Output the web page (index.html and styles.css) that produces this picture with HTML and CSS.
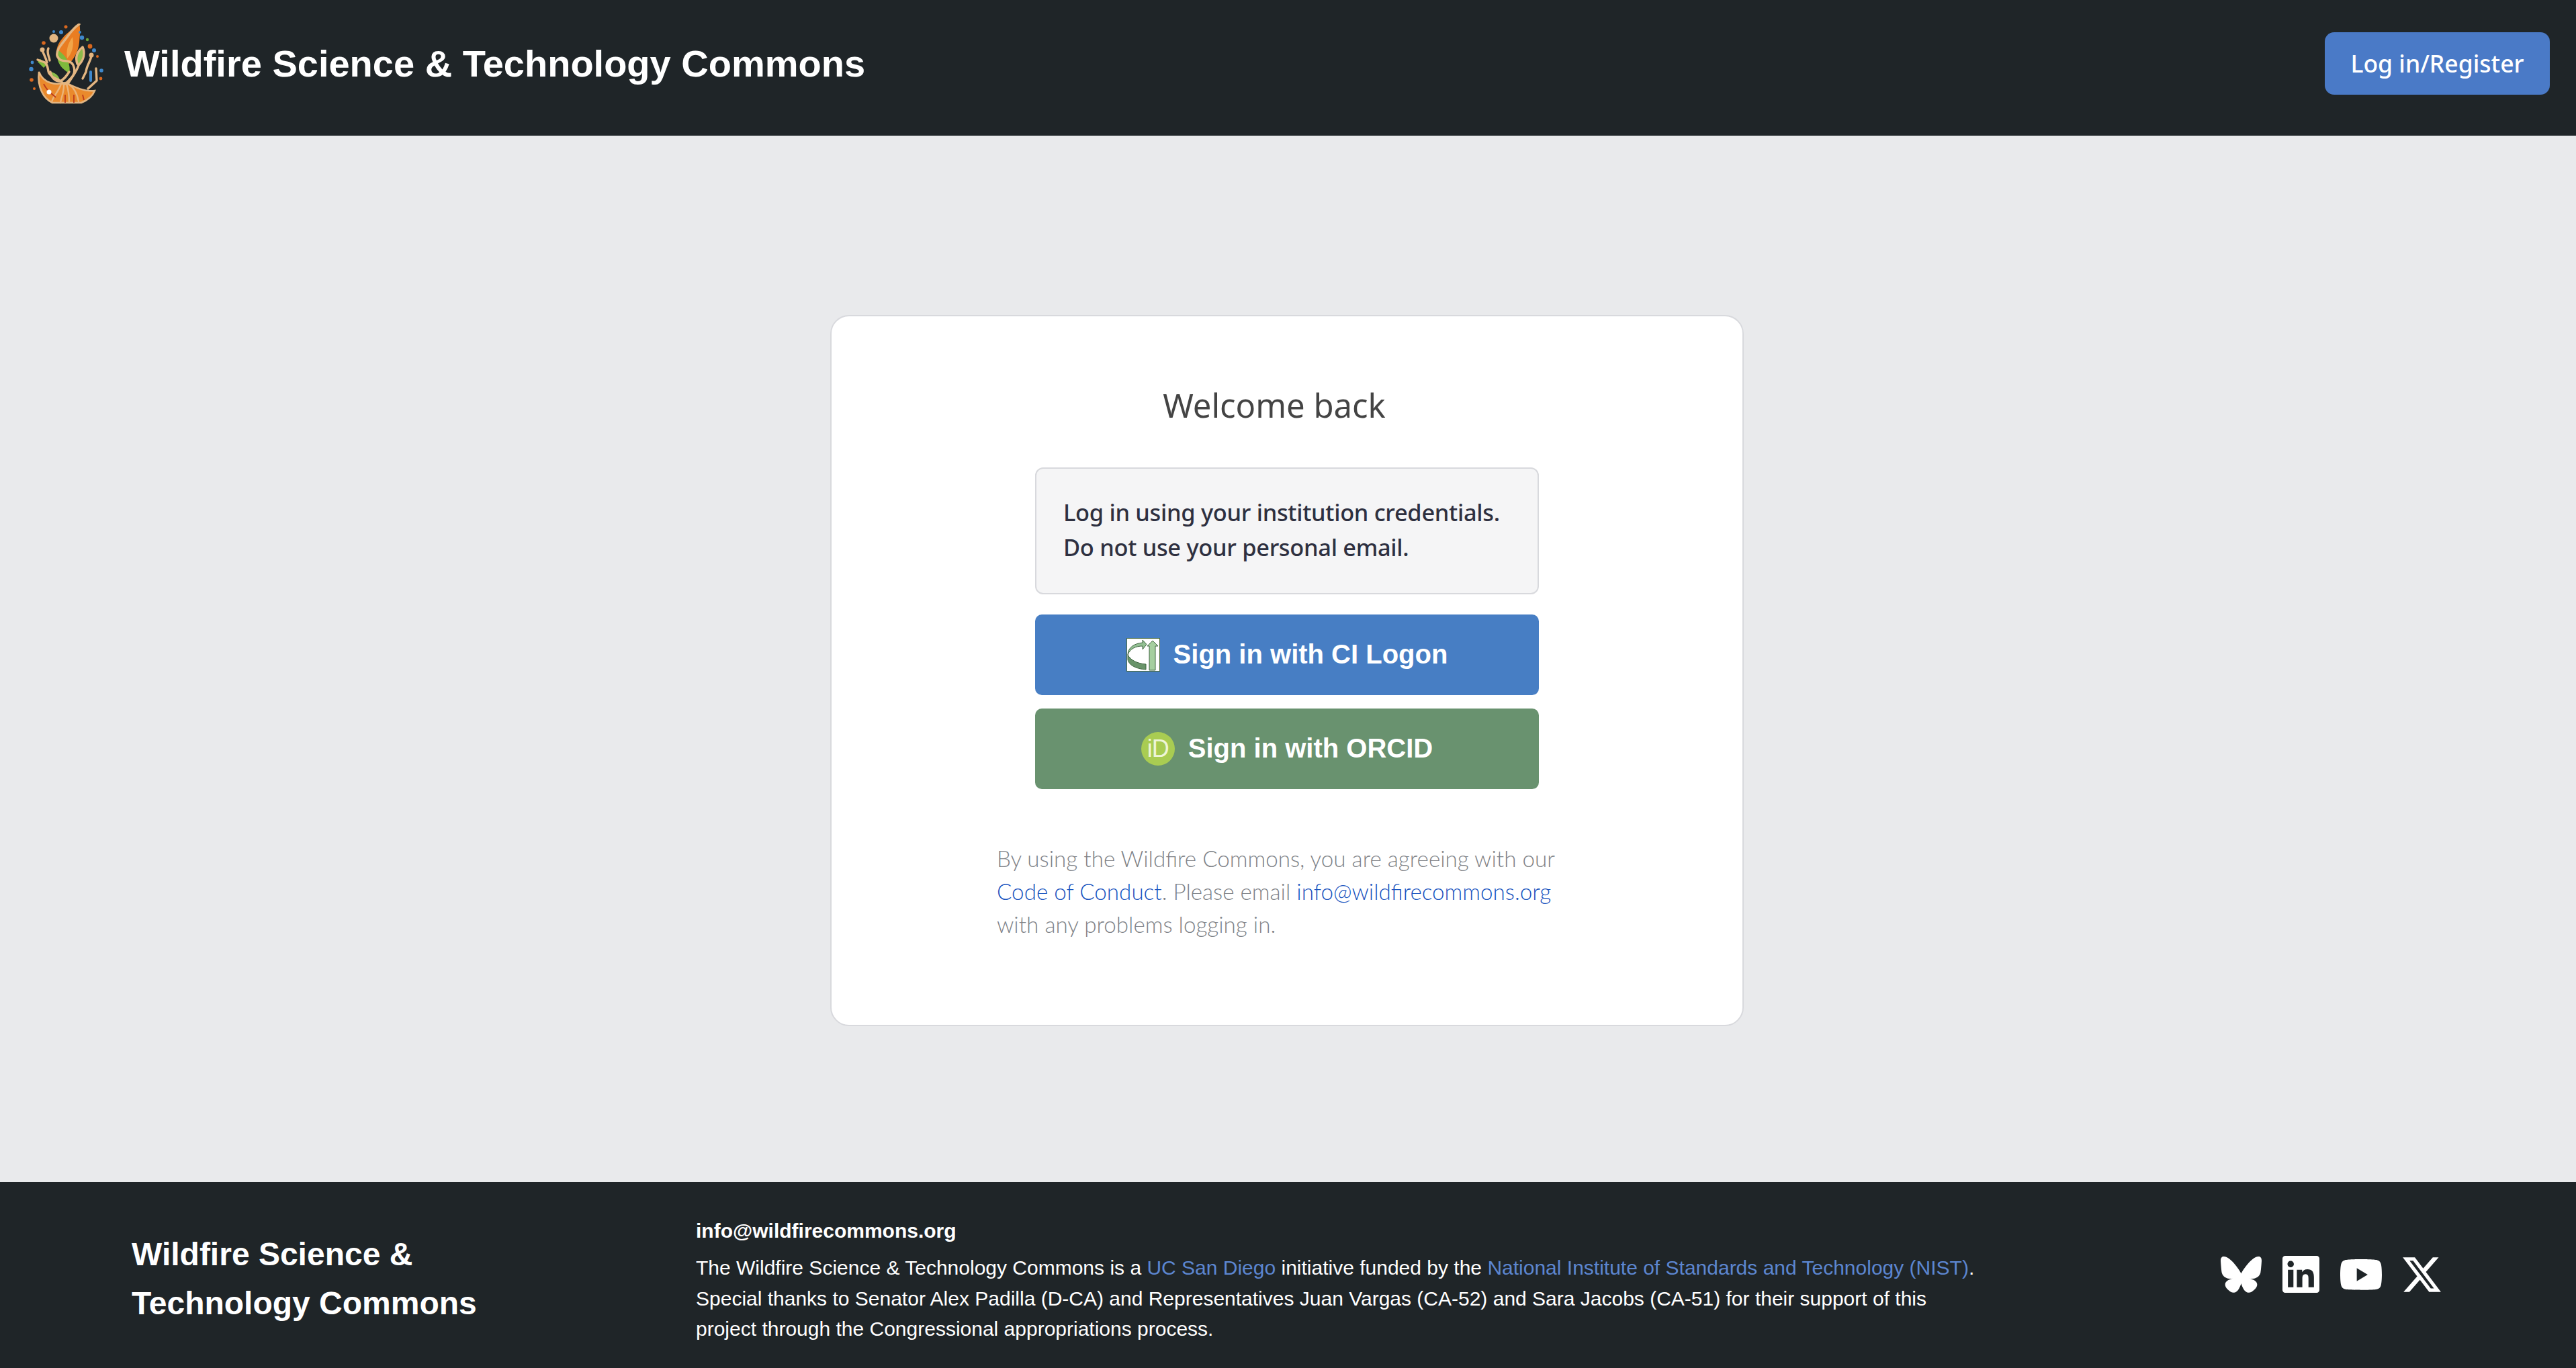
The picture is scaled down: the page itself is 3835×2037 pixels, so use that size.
FILE: index.html
```html
<!DOCTYPE html>
<html lang="en">
<head>
    <meta charset="UTF-8">
    <meta name="viewport" content="width=device-width, initial-scale=1.0">
    <title>Wildfire Science &amp; Technology Commons</title>
    <link rel="stylesheet" href="styles.css">
</head>
<body>

    <header class="topbar">
        <div class="brand">
            <svg class="logo" viewBox="0 0 112 120" aria-hidden="true">
                <!-- flames -->
                <path fill="#ea8a2c" stroke="#e3b682" stroke-width="2.5" d="M15 72C12 95 22 112 35 118L78 118C88 114 95 108 98 100C85 102 70 96 55 88C40 92 22 90 15 72Z"/>
                <path fill="#e97d22" d="M75 0C66 8 56 14 50 22C43 30 40 38 41 50C46 54 54 58 60 60C68 52 74 40 75 28C76 18 77 8 75 0Z"/>
                <path fill="#f2a548" d="M65 20C58 30 55 40 57 52C63 46 68 34 65 20Z"/>
                <path fill="#7fb93c" d="M44 40C39 54 46 66 60 74C63 60 55 48 44 40Z"/>
                <path fill="#8cbc4a" d="M80 37C73 42 69 50 72 62C80 55 84 46 80 37Z"/>
                <path fill="#8cbc4a" d="M32 72C33 80 39 86 46 86C46 79 40 73 32 72Z"/>
                <path fill="#7fb93c" d="M13 57L22 66L27 61L17 53Z"/>
                <!-- circuit branches -->
                <g fill="none" stroke="#e3b682" stroke-width="3.4" stroke-linecap="round" stroke-linejoin="round">
                    <path d="M52 91C48 82 36 84 30 74C27 68 30 64 24 58L13 54"/>
                    <path d="M54 90C62 82 72 76 66 62C60 50 48 62 42 48C40 38 52 28 60 16C66 8 70 4 75 1"/>
                    <path d="M72 60C68 48 74 40 80 35C84 44 82 54 74 62C72 70 64 80 58 90"/>
                    <path d="M20 40C22 46 25 50 27 58"/>
                    <path d="M29 37C26 44 30 48 31 55"/>
                    <path d="M32 72C33 80 39 86 46 86C52 84 56 78 60 72"/>
                    <path d="M93 48C92 56 86 62 85 72L80 82"/>
                    <path d="M100 67L101 85L88 97"/>
                </g>
                <g fill="none" stroke="#eab47a" stroke-width="2.4" stroke-linecap="round">
                    <path d="M48 90C44 102 36 108 34 117"/>
                    <path d="M52 92C52 104 48 110 47 118"/>
                    <path d="M56 90C60 102 60 110 60 118"/>
                    <path d="M60 91C68 96 72 106 74 116"/>
                </g>
                <g fill="none" stroke="#bd3a1c" stroke-width="1.8">
                    <path d="M22 90C28 102 34 104 40 110"/>
                    <path d="M54 106L54 118"/>
                    <path d="M67 106L67 118"/>
                    <path d="M80 106L82 114"/>
                </g>
                <circle cx="30" cy="102" r="3.5" fill="#fff"/>
                <circle cx="37" cy="22" r="6.5" fill="#e3b682"/>
                <circle cx="20" cy="39" r="3.5" fill="#e3b682"/>
                <circle cx="93" cy="47" r="3.5" fill="#e3b682"/>
                <!-- dots -->
                <g fill="#3f88cc">
                    <circle cx="48" cy="13" r="3"/>
                    <circle cx="79" cy="21" r="3.2"/>
                    <circle cx="97" cy="40" r="3"/>
                    <circle cx="3.5" cy="68" r="3.2"/>
                    <circle cx="5" cy="58" r="2.4"/>
                    <circle cx="108" cy="70" r="2.8"/>
                    <circle cx="76" cy="13" r="2"/>
                    <circle cx="37" cy="12" r="2"/>
                    <rect x="90" y="70" width="4" height="17" rx="2"/>
                </g>
                <g fill="#d9681f">
                    <circle cx="55" cy="5" r="2.5"/>
                    <circle cx="22" cy="29" r="2.8"/>
                    <circle cx="91" cy="34" r="3.4"/>
                    <circle cx="4" cy="84" r="2.8"/>
                    <circle cx="8" cy="97" r="2"/>
                    <circle cx="107" cy="82" r="2.4"/>
                    <circle cx="102" cy="49" r="2"/>
                </g>
                <circle cx="87" cy="24" r="2.2" fill="#6da33a"/>
            </svg>
            <span class="brand-name">Wildfire Science &amp; Technology Commons</span>
        </div>
        <a class="login-btn" href="#">Log in/Register</a>
    </header>

    <main class="content">
        <section class="card">
            <h1 class="card-title">Welcome back</h1>
            <div class="notice">
                Log in using your institution credentials.<br>
                Do not use your personal email.
            </div>
            <div class="providers">
                <a class="provider provider-cilogon" href="#">
                    <svg class="cilogon-icon" viewBox="0 0 50 50" aria-hidden="true">
                        <rect x="0.5" y="0.5" width="49" height="49" fill="#fff" stroke="#4b6b3f"/>
                        <path fill="#69946a" stroke="#3f6440" d="M2 25C6 33 16 38 29 39L29 47C14 46 3 40 2 32Z"/>
                        <path fill="#93c093" stroke="#3f6440" d="M2 25C2 14 12 8 24 7L24 3L30 9.5L24 17L24 12C14 12 5 16 2 25Z"/>
                        <path fill="#a5cf9f" stroke="#3f6440" d="M39 4L47 12L43 12L43 48L34 48L34 12L31 12Z"/>
                    </svg>
                    <span>Sign in with CI Logon</span>
                </a>
                <a class="provider provider-orcid" href="#">
                    <span class="orcid-icon">iD</span>
                    <span>Sign in with ORCID</span>
                </a>
            </div>
            <p class="agreement">
                By using the Wildfire Commons, you are agreeing with our
                <a href="#">Code of Conduct</a>. Please email
                <a href="#">info@wildfirecommons.org</a>
                with any problems logging in.
            </p>
        </section>
    </main>

    <footer class="footer">
        <div class="footer-name">Wildfire Science &amp;<br>Technology Commons</div>
        <div class="footer-text">
            <div class="footer-email">info@wildfirecommons.org</div>
            <p>The Wildfire Science &amp; Technology Commons is a <a href="#">UC San Diego</a> initiative funded by the <a href="#">National Institute of Standards and Technology (NIST)</a>. Special thanks to Senator Alex Padilla (D-CA) and Representatives Juan Vargas (CA-52) and Sara Jacobs (CA-51) for their support of this project through the Congressional appropriations process.</p>
        </div>
        <div class="socials">
            <svg class="icon-bluesky" viewBox="0 0 568 501" aria-hidden="true"><path d="M123.121 33.664C188.241 82.553 258.281 181.68 284 234.873c25.719-53.192 95.759-152.32 160.879-201.21C491.866-1.611 568-28.906 568 57.947c0 17.346-9.945 145.713-15.778 166.555-20.275 72.453-94.155 90.933-159.875 79.748C507.222 323.8 536.444 388.56 473.333 453.32c-119.86 122.992-172.272-30.859-185.702-70.281-2.462-7.227-3.614-10.608-3.631-7.733-.017-2.875-1.169.506-3.631 7.733-13.43 39.422-65.842 193.273-185.702 70.281-63.111-64.76-33.89-129.52 80.986-149.071-65.72 11.185-139.6-7.295-159.875-79.748C9.945 203.659 0 75.291 0 57.946 0-28.906 76.135-1.612 123.121 33.664Z"/></svg>
            <svg class="icon-linkedin" viewBox="0 0 24 24" aria-hidden="true"><path d="M20.447 20.452h-3.554v-5.569c0-1.328-.027-3.037-1.852-3.037-1.853 0-2.136 1.445-2.136 2.939v5.667H9.351V9h3.414v1.561h.046c.477-.9 1.637-1.85 3.37-1.85 3.601 0 4.267 2.37 4.267 5.455v6.286zM5.337 7.433c-1.144 0-2.063-.926-2.063-2.065 0-1.138.92-2.063 2.063-2.063 1.14 0 2.064.925 2.064 2.063 0 1.139-.925 2.065-2.064 2.065zm1.782 13.019H3.555V9h3.564v11.452zM22.225 0H1.771C.792 0 0 .774 0 1.729v20.542C0 23.227.792 24 1.771 24h20.451C23.2 24 24 23.227 24 22.271V1.729C24 .774 23.2 0 22.222 0h.003z"/></svg>
            <svg class="icon-youtube" viewBox="0 3.5 24 17" preserveAspectRatio="none" aria-hidden="true"><path d="M23.498 6.186a3.016 3.016 0 0 0-2.122-2.136C19.505 3.545 12 3.545 12 3.545s-7.505 0-9.377.505A3.017 3.017 0 0 0 .502 6.186C0 8.07 0 12 0 12s0 3.93.502 5.814a3.016 3.016 0 0 0 2.122 2.136c1.871.505 9.376.505 9.376.505s7.505 0 9.377-.505a3.015 3.015 0 0 0 2.122-2.136C24 15.93 24 12 24 12s0-3.93-.502-5.814zM9.545 15.568V8.432L15.818 12l-6.273 3.568z"/></svg>
            <svg class="icon-x" viewBox="0 1 24 22" aria-hidden="true"><path d="M18.901 1.153h3.68l-8.04 9.19L24 22.846h-7.406l-5.8-7.584-6.638 7.584H.474l8.6-9.83L0 1.154h7.594l5.243 6.932ZM17.61 20.644h2.039L6.486 3.24H4.298Z"/></svg>
        </div>
    </footer>

</body>
</html>
```

FILE: styles.css
```css
/* Basic Reset */
* {
    margin: 0;
    padding: 0;
    box-sizing: border-box;
}

body {
    display: flex;
    flex-direction: column;
    min-height: 100vh;
    background: #e9eaec;
    font-family: "Noto Sans", sans-serif;
}

a {
    text-decoration: none;
}

/* Header */
.topbar {
    display: flex;
    justify-content: space-between;
    align-items: center;
    height: 202px;
    padding: 0 39px 13px 43px;
    background: #1f2528;
}

.brand {
    display: flex;
    align-items: center;
    gap: 30px;
}

.logo {
    width: 112px;
    height: 120px;
    filter: blur(0.5px);
}

.brand-name {
    color: #fff;
    font-family: "Liberation Sans", sans-serif;
    font-size: 56px;
    font-weight: 700;
}

.login-btn {
    display: flex;
    align-items: center;
    justify-content: center;
    width: 335px;
    height: 93px;
    padding-bottom: 2px;
    background: #4a7ac7;
    color: #fff;
    font-size: 35.5px;
    font-weight: 500;
    border-radius: 14px;
}

/* Login card */
.content {
    flex: 1;
    display: flex;
    justify-content: center;
    align-items: flex-start;
    padding: 267px 3px 0 0;
}

.card {
    display: flex;
    flex-direction: column;
    align-items: center;
    width: 1360px;
    height: 1059px;
    padding-top: 102px;
    background: #fff;
    border: 2.5px solid #d8d9dd;
    border-radius: 28px;
}

.card-title {
    padding-right: 38px;
    color: #444;
    font-size: 49px;
    font-weight: 400;
    line-height: 60px;
}

.notice {
    width: 750px;
    height: 189px;
    margin-top: 62.5px;
    padding: 39px 40px;
    background: #f5f5f6;
    border: 2.5px solid #d8d9dd;
    border-radius: 12px;
    color: #2e3040;
    font-size: 34.4px;
    font-weight: 500;
    letter-spacing: -0.3px;
    line-height: 52px;
}

.providers {
    display: flex;
    flex-direction: column;
    gap: 20px;
    width: 750px;
    margin-top: 30px;
}

.provider {
    display: flex;
    align-items: center;
    justify-content: center;
    gap: 20px;
    height: 120px;
    border-radius: 10px;
    color: #fff;
    font-family: "Liberation Sans", sans-serif;
    font-size: 40px;
    font-weight: 700;
}

.provider-cilogon {
    background: #477ec4;
}

.provider-orcid {
    background: #69926f;
}

.cilogon-icon {
    width: 50px;
    height: 50px;
}

.orcid-icon {
    display: flex;
    align-items: center;
    justify-content: center;
    width: 50px;
    height: 50px;
    border-radius: 50%;
    background: #a9cc52;
    color: #eef5d8;
    font-size: 36px;
    font-weight: 400;
    letter-spacing: -1px;
}

.agreement {
    width: 864px;
    margin-top: 79px;
    color: #808388;
    font-family: Lato, sans-serif;
    font-size: 33.2px;
    font-weight: 300;
    line-height: 49px;
}

.agreement a {
    color: #1a55c0;
}

/* Footer */
.footer {
    display: flex;
    align-items: center;
    height: 277px;
    padding: 14px 201px 0 196px;
    background: #1f2528;
    color: #fff;
    font-family: "Liberation Sans", sans-serif;
}

.footer-name {
    width: 840px;
    margin-bottom: 4px;
    font-size: 48px;
    font-weight: 700;
    line-height: 73px;
}

.footer-text {
    width: 1915px;
    font-size: 30px;
    line-height: 45.5px;
}

.footer-email {
    margin-bottom: 10px;
    font-weight: 700;
}

.footer-text a {
    color: #5c86d0;
}

.socials {
    display: flex;
    align-items: center;
    gap: 31px;
    margin: 0 0 16px auto;
}

.socials svg {
    fill: #fff;
}

.icon-bluesky {
    width: 61px;
    height: 56px;
}

.icon-linkedin {
    width: 55px;
    height: 55px;
}

.icon-youtube {
    width: 62px;
    height: 46px;
}

.icon-x {
    width: 57px;
    height: 52px;
}
```
